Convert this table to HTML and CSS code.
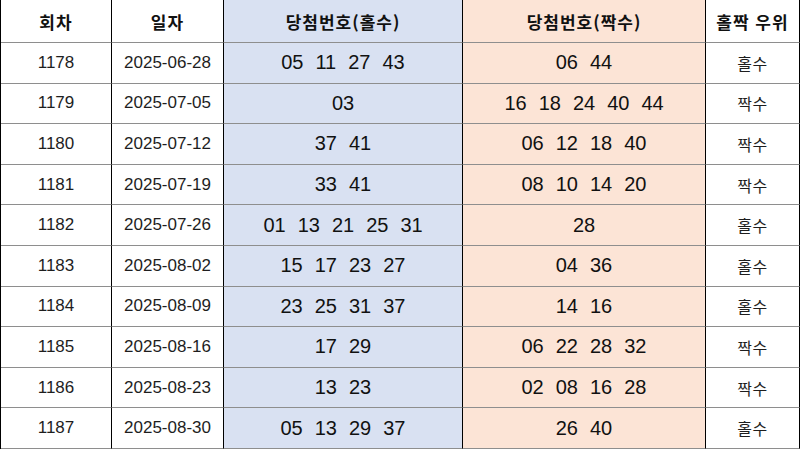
FILE: index.html
```html
<!DOCTYPE html>
<html lang="ko">
<head>
<meta charset="utf-8">
<title>당첨번호</title>
<link rel="stylesheet" href="styles.css">
</head>
<body>
<div class="grid">
  <div class="cell head">회차</div>
  <div class="cell head">일자</div>
  <div class="cell head odd">당첨번호(홀수)</div>
  <div class="cell head even">당첨번호(짝수)</div>
  <div class="cell head">홀짝 우위</div>

  <div class="cell num">1178</div><div class="cell num">2025-06-28</div>
  <div class="cell odd balls"><span>05</span><span>11</span><span>27</span><span>43</span></div>
  <div class="cell even balls"><span>06</span><span>44</span></div>
  <div class="cell ko">홀수</div>

  <div class="cell num">1179</div><div class="cell num">2025-07-05</div>
  <div class="cell odd balls"><span>03</span></div>
  <div class="cell even balls"><span>16</span><span>18</span><span>24</span><span>40</span><span>44</span></div>
  <div class="cell ko">짝수</div>

  <div class="cell num">1180</div><div class="cell num">2025-07-12</div>
  <div class="cell odd balls"><span>37</span><span>41</span></div>
  <div class="cell even balls"><span>06</span><span>12</span><span>18</span><span>40</span></div>
  <div class="cell ko">짝수</div>

  <div class="cell num">1181</div><div class="cell num">2025-07-19</div>
  <div class="cell odd balls"><span>33</span><span>41</span></div>
  <div class="cell even balls"><span>08</span><span>10</span><span>14</span><span>20</span></div>
  <div class="cell ko">짝수</div>

  <div class="cell num">1182</div><div class="cell num">2025-07-26</div>
  <div class="cell odd balls"><span>01</span><span>13</span><span>21</span><span>25</span><span>31</span></div>
  <div class="cell even balls"><span>28</span></div>
  <div class="cell ko">홀수</div>

  <div class="cell num">1183</div><div class="cell num">2025-08-02</div>
  <div class="cell odd balls"><span>15</span><span>17</span><span>23</span><span>27</span></div>
  <div class="cell even balls"><span>04</span><span>36</span></div>
  <div class="cell ko">홀수</div>

  <div class="cell num">1184</div><div class="cell num">2025-08-09</div>
  <div class="cell odd balls"><span>23</span><span>25</span><span>31</span><span>37</span></div>
  <div class="cell even balls"><span>14</span><span>16</span></div>
  <div class="cell ko">홀수</div>

  <div class="cell num">1185</div><div class="cell num">2025-08-16</div>
  <div class="cell odd balls"><span>17</span><span>29</span></div>
  <div class="cell even balls"><span>06</span><span>22</span><span>28</span><span>32</span></div>
  <div class="cell ko">짝수</div>

  <div class="cell num">1186</div><div class="cell num">2025-08-23</div>
  <div class="cell odd balls"><span>13</span><span>23</span></div>
  <div class="cell even balls"><span>02</span><span>08</span><span>16</span><span>28</span></div>
  <div class="cell ko">짝수</div>

  <div class="cell num">1187</div><div class="cell num">2025-08-30</div>
  <div class="cell odd balls"><span>05</span><span>13</span><span>29</span><span>37</span></div>
  <div class="cell even balls"><span>26</span><span>40</span></div>
  <div class="cell ko">홀수</div>
</div>
</body>
</html>
```

FILE: styles.css
```css
html, body {
  margin: 0;
  padding: 0;
  background: #ffffff;
}

.grid {
  display: grid;
  grid-template-columns: 111px 112px 239px 243px 94px;
  grid-template-rows: 43px repeat(10, 40.6px);
  width: 800px;
  border-left: 1px solid #000;
  box-sizing: border-box;
  color: #1e1e1e;
}

.cell {
  display: flex;
  align-items: center;
  justify-content: center;
  border-right: 1px solid #000;
  border-bottom: 1px solid #8e8e8e;
  box-sizing: border-box;
  background: #ffffff;
}

.head {
  font-family: "Noto Sans CJK KR", "Noto Sans", sans-serif;
  font-weight: 700;
  font-size: 17px;
  letter-spacing: 1px;
  color: #111;
  padding-top: 1px;
}

.odd { background: #d9e1f2; }
.even { background: #fce4d6; }

.num {
  font-family: "Liberation Sans", Arial, sans-serif;
  font-size: 17px;
}

.balls {
  font-family: "Liberation Sans", Arial, sans-serif;
  font-size: 20px;
  gap: 12px;
  color: #111;
}

.ko {
  font-family: "Noto Sans CJK KR", "Noto Sans", sans-serif;
  font-size: 16px;
  letter-spacing: 0.5px;
}
```
